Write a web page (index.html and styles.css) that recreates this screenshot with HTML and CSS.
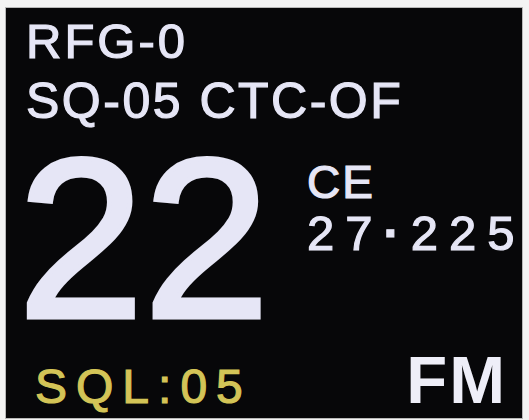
FILE: index.html
```html
<!DOCTYPE html>
<html lang="en">
<head>
<meta charset="utf-8">
<title>Radio display</title>
<link rel="stylesheet" href="styles.css">
</head>
<body>
<div class="screen">
  <div class="line line-rfg">RFG-0</div>
  <div class="line line-sq">SQ-05 CTC-OF</div>
  <div class="middle">
    <div class="channel">22</div>
    <div class="info">
      <div class="region">CE</div>
      <div class="freq">27<span class="dot">·</span>22<span class="last">5</span></div>
    </div>
  </div>
  <div class="bottom">
    <div class="sql">SQL:05</div>
    <div class="mode">FM</div>
  </div>
</div>
</body>
</html>
```

FILE: styles.css
```css
html, body {
  margin: 0;
  padding: 0;
}

body {
  background: #f3f3f3;
  width: 529px;
  height: 420px;
  overflow: hidden;
  font-family: "Liberation Sans", Arial, sans-serif;
}

.screen {
  box-sizing: border-box;
  margin: 8px 0 0 6px;
  width: 516px;
  height: 410px;
  background: #070709;
  box-shadow: 0 0 0 1px #b8b8b8;
  padding: 3px 0 0 20px;
  display: flex;
  flex-direction: column;
  color: #e6e6f6;
  -webkit-text-stroke: 1.2px currentColor;
}

.line {
  height: 60px;
  line-height: 60px;
  white-space: nowrap;
}

.line-rfg {
  font-size: 49px;
  letter-spacing: 3px;
}

.line-sq {
  font-size: 50px;
  letter-spacing: 2.5px;
}

.middle {
  display: flex;
  align-items: flex-start;
}

.channel {
  flex: none;
  font-size: 226px;
  line-height: 180px;
  height: 180px;
  margin: 18px 0 0 -8px;
  width: 289px;
  -webkit-text-stroke: 5px currentColor;
}

.info {
  flex: none;
  margin-top: 26px;
  white-space: nowrap;
}

.region {
  font-size: 46px;
  line-height: 50px;
  letter-spacing: 2px;
}

.freq {
  font-size: 49px;
  line-height: 52px;
  letter-spacing: 11px;
}

.freq .last {
  letter-spacing: 0;
}

.dot {
  font-weight: bold;
}

.bottom {
  margin-top: 16px;
  display: flex;
  justify-content: space-between;
  align-items: baseline;
}

.sql {
  margin-left: 9px;
  font-size: 48px;
  line-height: 70px;
  letter-spacing: 9px;
  color: #d3c457;
}

.mode {
  margin-right: 15px;
  font-size: 67px;
  line-height: 70px;
  font-weight: bold;
  letter-spacing: 2px;
  color: #eeeef8;
  -webkit-text-stroke: 0;
}
```
